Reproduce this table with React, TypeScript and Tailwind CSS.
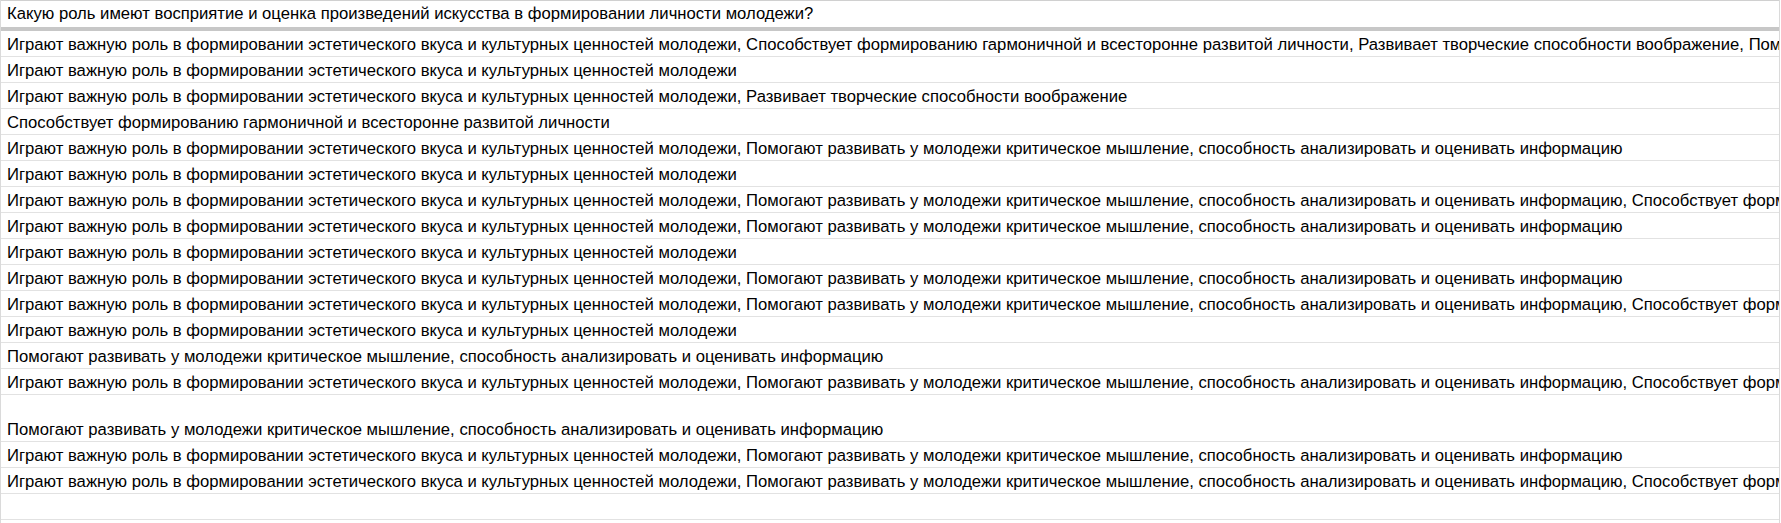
import React from 'react';

const A = 'Играют важную роль в формировании эстетического вкуса и культурных ценностей молодежи';
const B = 'Способствует формированию гармоничной и всесторонне развитой личности';
const C = 'Развивает творческие способности воображение';
const D = 'Помогают развивать у молодежи критическое мышление, способность анализировать и оценивать информацию';

const rows: { text: string; tall?: boolean }[] = [
  { text: [A, B, C, D].join(', ') },
  { text: A },
  { text: [A, C].join(', ') },
  { text: B },
  { text: [A, D].join(', ') },
  { text: A },
  { text: [A, D, B].join(', ') },
  { text: [A, D].join(', ') },
  { text: A },
  { text: [A, D].join(', ') },
  { text: [A, D, B].join(', ') },
  { text: A },
  { text: D },
  { text: [A, D, B].join(', ') },
  { text: D, tall: true },
  { text: [A, D].join(', ') },
  { text: [A, D, B].join(', ') },
  { text: '' },
  { text: '' },
];

function Cell({ text, tall }: { text: string; tall?: boolean }) {
  return (
    <div
      className={`flex items-end border-b border-[#e2e2e2] px-[6px] pb-[1px] overflow-hidden ${
        tall ? 'h-[47px]' : 'h-[26px]'
      }`}
    >
      <span className="whitespace-nowrap leading-[20px]">{text}</span>
    </div>
  );
}

export default function App() {
  return (
    <div
      className="h-[523px] overflow-hidden bg-white text-black text-[16.67px]"
      style={{ fontFamily: '"Liberation Sans", Arial, sans-serif' }}
    >
      <div className="w-[1780px] border-l border-r border-[#dadada]">
        {/* frozen header row */}
        <div className="flex items-end h-[27px] border-t border-[#d0d0d0] px-[6px] pb-[3px] overflow-hidden">
          <span className="whitespace-nowrap leading-[20px]">
            Какую роль имеют восприятие и оценка произведений искусства в формировании личности молодежи?
          </span>
        </div>
        <div className="h-[4px] bg-[#c7c7c7]" />
        {rows.map((r, i) => (
          <Cell key={i} text={r.text} tall={r.tall} />
        ))}
      </div>
    </div>
  );
}
